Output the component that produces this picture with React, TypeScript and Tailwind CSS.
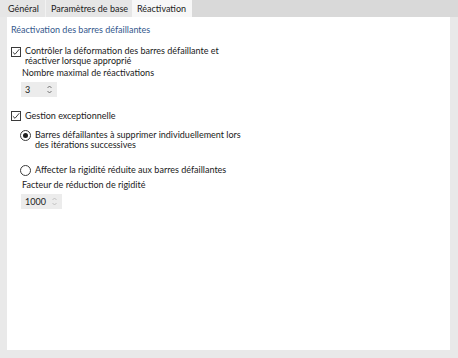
import React from "react";

function CheckBox() {
  return (
    <div className="w-[10px] h-[10px] border border-[#3a3a3a] bg-white flex items-center justify-center shrink-0">
      <svg width="8" height="8" viewBox="0 0 8 8">
        <path d="M0.8 4.2 L3 6.3 L7.3 1.2" fill="none" stroke="#2a2a2a" strokeWidth="0.9" />
      </svg>
    </div>
  );
}

function Radio({ checked }: { checked: boolean }) {
  return (
    <div className="w-[11px] h-[11px] rounded-full border border-[#3a3a3a] bg-white flex items-center justify-center shrink-0">
      {checked && <div className="w-[5px] h-[5px] rounded-full bg-[#1f1f1f]" />}
    </div>
  );
}

function Spinner({ value, width, disabled }: { value: string; width: string; disabled?: boolean }) {
  const c = disabled ? "#b8b8b8" : "#555555";
  return (
    <div className={`${width} h-[15px] bg-[#ececec] flex items-center justify-between pl-[4px] pr-[5px]`}>
      <span className="text-[#1a1a1a]">{value}</span>
      <svg width="5" height="9" viewBox="0 0 5 9">
        <path d="M0.5 3 L2.5 1 L4.5 3" fill="none" stroke={c} strokeWidth="0.8" />
        <path d="M0.5 6 L2.5 8 L4.5 6" fill="none" stroke={c} strokeWidth="0.8" />
      </svg>
    </div>
  );
}

export default function App() {
  return (
    <div
      className="w-[458px] h-[358px] bg-[#e9e9e9] flex flex-col text-[9px] leading-[10px] text-[#1a1a1a] whitespace-nowrap"
      style={{ fontFamily: 'Lato, "Noto Sans", sans-serif' }}
    >
      <div className="h-[17px] flex bg-[#d9d9d9] shrink-0">
        <div className="w-[46px] bg-[#e6e6e6] border-r border-[#f2f2f2] flex items-center pl-[8px]">Général</div>
        <div className="w-[86px] bg-[#e6e6e6] flex items-center pl-[5px]">Paramètres de base</div>
        <div className="w-[60px] bg-[#f7f7f7] flex items-center pl-[5px]">Réactivation</div>
      </div>
      <div className="flex-1 ml-[7px] mr-[8px] mb-[8px] bg-white pt-[8px] pl-[4px] flex flex-col">
        <div className="text-[#34578c]">Réactivation des barres défaillantes</div>

        <div className="mt-[11px] flex items-start gap-[4px]">
          <div className="mt-[1px]">
            <CheckBox />
          </div>
          <div>
            Contrôler la déformation des barres défaillante et
            <br />
            réactiver lorsque approprié
          </div>
        </div>

        <div className="ml-[10px] flex flex-col">
          <div className="mt-[2px] ml-[1px]">Nombre maximal de réactivations</div>
          <div className="mt-[4px]">
            <Spinner value="3" width="w-[36px]" />
          </div>
        </div>

        <div className="mt-[14px] flex items-start gap-[4px]">
          <div className="mt-[0px]">
            <CheckBox />
          </div>
          <div>Gestion exceptionnelle</div>
        </div>

        <div className="ml-[9px] flex flex-col">
          <div className="mt-[9px] flex items-start gap-[4px]">
            <Radio checked />
            <div>
              Barres défaillantes à supprimer individuellement lors
              <br />
              des itérations successives
            </div>
          </div>
          <div className="mt-[15px] flex items-start gap-[4px]">
            <Radio checked={false} />
            <div>Affecter la rigidité réduite aux barres défaillantes</div>
          </div>
        </div>

        <div className="ml-[10px] flex flex-col">
          <div className="mt-[4px] ml-[1px]">Facteur de réduction de rigidité</div>
          <div className="mt-[4px]">
            <Spinner value="1000" width="w-[41px]" disabled />
          </div>
        </div>
      </div>
    </div>
  );
}
